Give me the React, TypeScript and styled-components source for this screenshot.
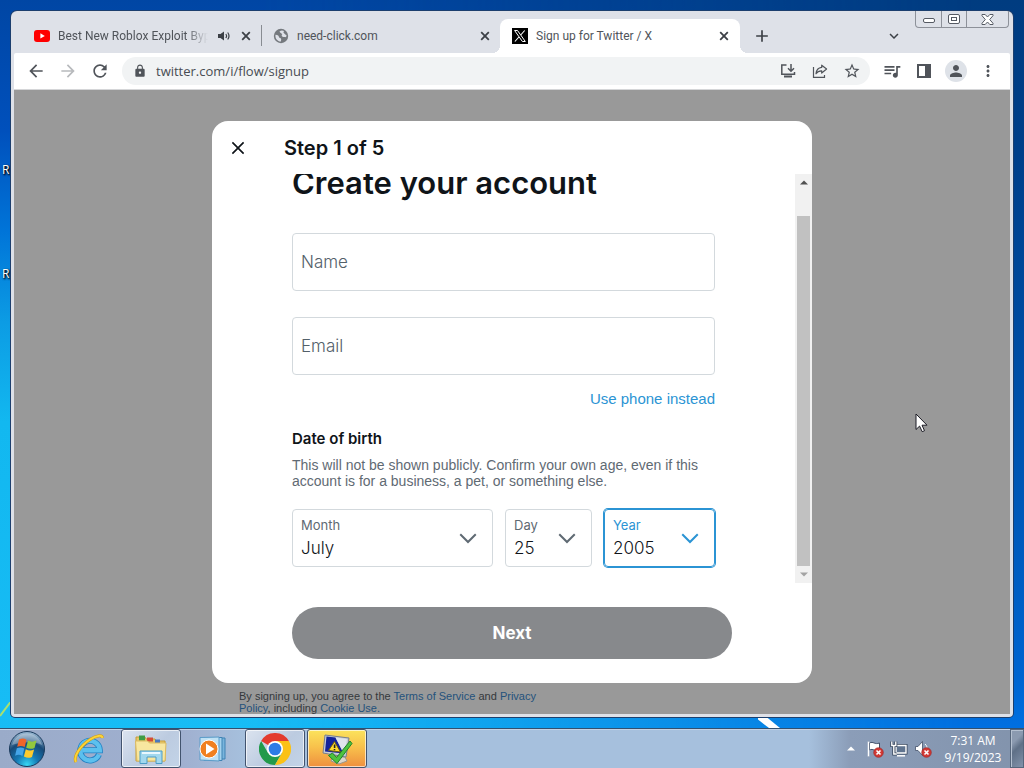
import React from "react";
import styled, { createGlobalStyle, css } from "styled-components";
import {
  MdAdd,
  MdArrowBack,
  MdArrowForward,
  MdExpandMore,
  MdLock,
  MdMoreVert,
  MdPerson,
  MdQueueMusic,
  MdRefresh,
  MdStarBorder,
} from "react-icons/md";

const systemFont = `"Open Sans", "Noto Sans", sans-serif`;
const tabFont = `Roboto, "Open Sans", sans-serif`;
const pageFont = `Inter, Roboto, "Liberation Sans", sans-serif`;
const copyFont = `"Liberation Sans", Arial, sans-serif`;

const GlobalStyle = createGlobalStyle`
  *, *::before, *::after { box-sizing: border-box; }
  body { margin: 0; }
  button, input, select { font: inherit; color: inherit; margin: 0; }
  button { padding: 0; border: 0; background: none; }
  svg { display: block; flex: none; }
`;

/* ---------- Desktop ---------- */

const Desktop = styled.div`
  position: relative;
  display: flex;
  flex-direction: column;
  min-height: 100vh;
  overflow: hidden;
  font-family: ${systemFont};
  background: linear-gradient(#003c80, #003f8a 20%, #0055b2 60%, #0064d0 88%, #0078ee);
  &::before {
    content: "";
    position: absolute;
    inset: 0;
    background: linear-gradient(#0046a4, #0050bc 17%, #0074d8 30%, #0c9ce4 42%, #12b8f0 55%, #18bdf6);
    mask-image: linear-gradient(to right, #000 25%, transparent 95%);
  }
`;

const WallpaperRay = styled.svg<{ $left: string }>`
  position: absolute;
  bottom: 40px;
  left: ${(p) => p.$left};
`;

const DesktopLabel = styled.span<{ $top: number }>`
  position: absolute;
  left: 2px;
  top: ${(p) => p.$top}px;
  font-size: 12px;
  line-height: 16px;
  color: #fff;
  text-shadow: 1px 1px 2px #000, 1px 1px 2px #000;
`;

const WorkArea = styled.div`
  position: relative;
  flex: 1;
  display: flex;
  padding: 11px;
`;

const Pointer = styled.svg`
  position: absolute;
  left: 915px;
  top: 413px;
`;

/* ---------- Browser window ---------- */

const BrowserWindow = styled.div`
  position: relative;
  flex: 1;
  min-width: 0;
  display: flex;
  flex-direction: column;
  padding: 0 3px 3px;
  border-radius: 6px 6px 4px 4px;
  background: #dee1e8;
  box-shadow: 0 0 0 1px #1c3f6e;
`;

const TabStrip = styled.div`
  display: flex;
  align-items: flex-end;
  height: 42px;
  padding-left: 9px;
`;

const Tab = styled.div<{ $active?: boolean; $divider?: boolean }>`
  position: relative;
  flex: 0 1 240px;
  min-width: 0;
  display: flex;
  align-items: center;
  gap: 8px;
  height: 34px;
  margin-left: -1px;
  padding: 0 8px 0 12px;
  font-family: ${tabFont};
  font-size: 12px;
  color: #50545a;
  ${(p) =>
    p.$divider &&
    css`
      border-right: 1px solid #888c92;
      border-image: linear-gradient(transparent 20%, #888c92 20% 78%, transparent 78%) 1;
      padding-right: 7px;
    `}
  ${(p) =>
    p.$active &&
    css`
      background: #fff;
      border-radius: 8px 8px 0 0;
      &::before, &::after {
        content: "";
        position: absolute;
        bottom: 0;
        width: 8px;
        height: 8px;
      }
      &::before { left: -8px; background: radial-gradient(circle at 0 0, transparent 8px, #fff 8px); }
      &::after { right: -8px; background: radial-gradient(circle at 100% 0, transparent 8px, #fff 8px); }
    `}
`;

const TabTitle = styled.span<{ $fade?: boolean }>`
  flex: 1;
  min-width: 0;
  overflow: hidden;
  white-space: nowrap;
  ${(p) => p.$fade && css`mask-image: linear-gradient(to right, #000 85%, transparent);`}
`;

const TabButton = styled.button`
  display: grid;
  place-items: center;
  width: 16px;
  height: 16px;
  color: #3c4046;
`;

const TabControls = styled.div`
  display: flex;
  gap: 6px;
`;

const StripButton = styled.button`
  display: grid;
  place-items: center;
  width: 28px;
  height: 34px;
  margin-left: 8px;
  color: #3c4046;
`;

const TabSearch = styled(StripButton)`
  margin-left: auto;
  margin-right: 102px;
`;

const Caption = styled.div`
  position: absolute;
  top: 0;
  right: 4px;
  display: flex;
  border: 1px solid #8d9199;
  border-top: 0;
  border-radius: 0 0 4px 4px;
`;

const CaptionButton = styled.button<{ $wide?: boolean }>`
  display: grid;
  place-items: center;
  width: ${(p) => (p.$wide ? 42 : 25)}px;
  height: 16px;
  & + & { border-left: 1px solid #8d9199; }
`;

const Toolbar = styled.div`
  display: flex;
  align-items: center;
  gap: 4px;
  height: 37px;
  padding: 0 8px;
  background: #fff;
  border-radius: 2px 2px 0 0;
  border-bottom: 1px solid #d5d6d8;
  color: #50545a;
`;

const ToolButton = styled.button<{ $dim?: boolean }>`
  flex: none;
  display: grid;
  place-items: center;
  width: 28px;
  height: 28px;
  color: ${(p) => (p.$dim ? "#b8babd" : "inherit")};
`;

const Omnibox = styled.div`
  flex: 1;
  min-width: 0;
  display: flex;
  align-items: center;
  gap: 4px;
  height: 28px;
  margin: 0 4px;
  padding: 0 4px 0 11px;
  border-radius: 14px;
  background: #f1f3f4;
`;

const Address = styled.input`
  flex: 1;
  min-width: 0;
  padding: 0 0 0 5px;
  border: 0;
  outline: 0;
  background: none;
  font-size: 13px;
  line-height: 20px;
  color: #484c52;
`;

const Avatar = styled.span`
  display: grid;
  place-items: center;
  width: 22px;
  height: 22px;
  border-radius: 50%;
  background: #dee2e8;
`;

/* ---------- Sign-up page ---------- */

const Page = styled.main`
  flex: 1;
  display: flex;
  flex-direction: column;
  align-items: center;
  overflow: hidden;
  padding-top: 31px;
  background: #999;
  font-family: ${pageFont};
  color: #0f1419;
`;

const Dialog = styled.section`
  width: 600px;
  max-width: 100%;
  border-radius: 16px;
  background: #fff;
  overflow: hidden;
`;

const DialogHeader = styled.header`
  display: flex;
  align-items: center;
  gap: 36px;
  height: 53px;
  padding: 0 16px;
`;

const CloseButton = styled.button`
  display: grid;
  place-items: center;
  width: 20px;
  height: 20px;
`;

const StepTitle = styled.h2`
  margin: 0;
  font-size: 20px;
  line-height: 24px;
  font-weight: 600;
`;

const DialogBody = styled.div`
  display: flex;
  overflow: hidden;
`;

const Form = styled.form`
  flex: 1;
  min-width: 0;
  display: flex;
  flex-direction: column;
  padding: 0 80px 16px;
`;

const Heading = styled.h1`
  margin: 0 0 41px;
  font-size: 31px;
  line-height: 18px;
  font-weight: 600;
`;

const TextField = styled.input`
  width: 100%;
  height: 58px;
  margin-bottom: 26px;
  padding: 0 8px;
  border: 1px solid #d3d9dd;
  border-radius: 4px;
  background: none;
  font-size: 17px;
  font-weight: 300;
  &::placeholder { color: #536069; opacity: 1; }
`;

const EmailField = styled(TextField)`
  margin-bottom: 14px;
`;

const PhoneLink = styled.a`
  align-self: flex-end;
  margin-bottom: 20px;
  font-family: ${copyFont};
  font-size: 15px;
  line-height: 20px;
  color: #2b94d4;
  text-decoration: none;
`;

const GroupTitle = styled.h3`
  margin: 0 0 8px;
  font-size: 15px;
  line-height: 20px;
  font-weight: 600;
`;

const Hint = styled.p`
  margin: 0 0 20px;
  font-family: ${copyFont};
  font-size: 14px;
  line-height: 16px;
  color: #5f6a73;
`;

const DateRow = styled.div`
  display: grid;
  grid-template-columns: 201fr 87fr 111fr;
  gap: 12px;
`;

const SelectBox = styled.div<{ $focused?: boolean }>`
  display: grid;
  height: 58px;
  border: 1px solid ${(p) => (p.$focused ? "#2b94d4" : "#d3d9dd")};
  box-shadow: ${(p) => (p.$focused ? "0 0 0 1px #2b94d4" : "none")};
  border-radius: 4px;
  color: ${(p) => (p.$focused ? "#2b94d4" : "#5f6a73")};
  & > * { grid-area: 1 / 1; }
  & > svg { place-self: center end; margin-right: 12px; pointer-events: none; }
`;

const SelectLabel = styled.label`
  padding: 6px 8px;
  font-size: 13px;
  line-height: 18px;
`;

const Select = styled.select`
  width: 100%;
  height: 100%;
  padding: 20px 8px 0;
  border: 0;
  outline: 0;
  appearance: none;
  background: none;
  font-size: 17px;
  font-weight: 300;
  color: #0f1419;
`;

const DialogFooter = styled.footer`
  padding: 24px 80px;
`;

const NextButton = styled.button`
  width: 100%;
  height: 52px;
  border-radius: 26px;
  background: #87898c;
  color: #fff;
  font-size: 17px;
  font-weight: 700;
`;

const ScrollBar = styled.div`
  display: flex;
  flex-direction: column;
  align-items: center;
  width: 17px;
  background: #f1f1f1;
`;

const ScrollArrow = styled.button`
  display: grid;
  place-items: center;
  width: 17px;
  height: 17px;
`;

const ScrollThumb = styled.div`
  flex: 1;
  width: 13px;
  margin-top: 25px;
  background: #c1c1c1;
`;

const Terms = styled.p`
  width: 600px;
  max-width: 100%;
  margin: 7px 0 0;
  padding: 0 260px 0 27px;
  font-family: ${copyFont};
  font-size: 11px;
  line-height: 12px;
  color: #34383c;
  a { color: #24527c; text-decoration: none; }
`;

/* ---------- Taskbar ---------- */

const Taskbar = styled.footer`
  position: relative;
  display: flex;
  height: 40px;
  border-top: 1px solid #33506f;
  box-shadow: inset 0 1px 0 #c3d2e6;
  background: linear-gradient(to right, #9aabc9, #a0b0d0 18%, #a6c0dd 24%, #a6c0dd 79%, #8b9db8 83%, #8293ac);
`;

const StartButton = styled.button`
  display: grid;
  place-items: center;
  width: 54px;
  margin-right: 5px;
`;

const TaskButton = styled.button<{ $state?: "open" | "alert" }>`
  display: grid;
  place-items: center;
  width: 60px;
  margin-right: 2px;
  border: 1px solid transparent;
  border-radius: 3px;
  ${(p) =>
    p.$state &&
    css`
      border-color: #42536e;
      box-shadow: inset 0 0 0 1px #ffffffaa;
      background: ${p.$state === "open"
        ? "linear-gradient(135deg, #dbe3ef, #bccbe0 55%, #c3d4e8)"
        : "linear-gradient(#fbe35c, #f8c24c 45%, #ef8f3f)"};
    `}
`;

const Tray = styled.div`
  display: flex;
  align-items: center;
  gap: 6px;
  margin-left: auto;
`;

const TrayButton = styled.button`
  display: grid;
  place-items: center;
  width: 18px;
  height: 24px;
`;

const Clock = styled.time`
  width: 66px;
  margin: 0 4px 0 2px;
  font-size: 12px;
  line-height: 17px;
  text-align: center;
  color: #fff;
`;

const ShowDesktop = styled.button`
  width: 14px;
  border: 1px solid #56667c;
  box-shadow: inset 1px 1px 0 #b4c0d0;
  background: linear-gradient(135deg, #8b9ab0 30%, #5f7087 50%, #8292aa);
`;

/* ---------- Drawings ---------- */

const YouTubeIcon = () => (
  <svg width="16" height="16" viewBox="0 0 16 16">
    <rect y="2" width="16" height="12" rx="3" fill="#f00" />
    <path d="M6.4 5.3v5.2L10.8 8z" fill="#fff" />
  </svg>
);

const XIcon = () => (
  <svg width="16" height="16" viewBox="0 0 16 16">
    <path d="M0 0h16v16H0z" />
    <path d="M2.6 2.5h2.9l7.8 11h-2.9z" fill="#000" stroke="#fff" strokeWidth="1" />
    <path d="M12.7 2.5 8.7 7M6.9 9l-4 4.5" stroke="#fff" strokeWidth="1.1" />
  </svg>
);

const GlobeIcon = () => (
  <svg width="16" height="16" viewBox="0 0 16 16">
    <circle cx="8" cy="8" r="7.200" fill="#75797e" />
    <path d="M2.500 6.800c2.500.1 3.200 1 3.400 2.200.3 1.300 2.400.8 2.300 2.300l-.3 2.300C4.500 13.500 1.800 10.500 2.500 6.800z" fill="#dee1e8" />
    <path d="M6.500 3.400c1.300-1.200 3.300-1.200 4.500-.4l-.6 1.600 1.400 1.500c.6.8 1.500.6 1.700 1.500.2 1-.6 1.900-1.600 1.500-.8-.3-2.200.2-2.900-.8-.6-.9-.3-1.700.4-2.200-.9-.6-2.200-1.400-2.900-2.700z" fill="#dee1e8" />
  </svg>
);

const TabCloseIcon = () => (
  <svg width="10" height="10" viewBox="0 0 10 10">
    <path d="m1.200 1.200 7.600 7.600M8.800 1.200 1.200 8.800" stroke="currentColor" strokeWidth="1.800" />
  </svg>
);

const SoundIcon = () => (
  <svg width="12" height="10" viewBox="0 0 12 10">
    <path d="M0 3h2.500L6 .5v9L2.500 7H0z" fill="currentColor" />
    <path d="M7.800 3c.8 1 .8 3 0 4M9.700 1.500c1.500 2 1.500 5 0 7" fill="none" stroke="currentColor" strokeWidth="1.200" />
  </svg>
);

const InstallIcon = () => (
  <svg width="16" height="16" viewBox="0 0 16 16" fill="none" stroke="currentColor" strokeWidth="1.500">
    <path d="M6.500 2H1.800v9.300h12.700V9" />
    <path d="M11 1v7M8 5.300l3 3 3-3" />
    <path d="M4 13.500h8" strokeWidth="2" />
  </svg>
);

const ShareIcon = () => (
  <svg width="16" height="16" viewBox="0 0 16 16" fill="none" stroke="currentColor" strokeWidth="1.200">
    <path d="M1.500 4v10.300h11V12" />
    <path d="M9.700 2.200 14.600 6 9.700 10V7.800C7.200 7.700 5.400 8.600 4 10.800 4.300 7.200 6.300 4.800 9.700 4.400z" strokeLinejoin="round" />
  </svg>
);

const PanelIcon = () => (
  <svg width="14" height="14" viewBox="0 0 14 14">
    <path fillRule="evenodd" d="M0 0h14v14H0zM2 2v10h6V2z" fill="currentColor" />
  </svg>
);

const MinimizeGlyph = () => (
  <svg width="12" height="8" viewBox="0 0 12 8">
    <rect x="0.5" y="3.5" width="11" height="4" rx="1.5" fill="#fff" stroke="#555a63" />
  </svg>
);

const MaximizeGlyph = () => (
  <svg width="12" height="10" viewBox="0 0 12 10" fill="#fff" stroke="#555a63">
    <rect x="0.5" y="0.5" width="11" height="9" rx="1.5" />
    <rect x="3.5" y="3.5" width="5" height="3" />
  </svg>
);

const CloseGlyph = () => (
  <svg width="13" height="11" viewBox="0 0 13 11">
    <path
      d="M1 .5h3.200L6.500 3 8.800.5H12v1.200L8.700 5.500 12 9.300v1.200H8.800L6.500 8l-2.300 2.500H1V9.300l3.300-3.800L1 1.700z"
      fill="#fff"
      stroke="#555a63"
    />
  </svg>
);

const DialogClose = () => (
  <svg width="20" height="20" viewBox="0 0 24 24" fill="#0f1419">
    <path d="M10.590 12 4.540 5.960l1.420-1.420L12 10.590l6.040-6.050 1.420 1.420L13.410 12l6.050 6.040-1.420 1.420L12 13.410l-6.040 6.050-1.420-1.420z" />
  </svg>
);

const Chevron = () => (
  <svg width="24" height="24" viewBox="0 0 24 24" fill="currentColor">
    <path d="M3.540 8.960l1.420-1.420L12 14.590l7.040-7.050 1.420 1.420L12 17.410z" />
  </svg>
);

const Triangle = ({ down, color = "#505050" }: { down?: boolean; color?: string }) => (
  <svg width="8" height="5" viewBox="0 0 8 5">
    <path d={down ? "M0 .5h8L4 4.500z" : "M0 4.500h8L4 .5z"} fill={color} />
  </svg>
);

const StartOrb = () => (
  <svg width="38" height="38" viewBox="0 0 38 38">
    <defs>
      <radialGradient id="orb" cx=".5" cy=".95" r=".9">
        <stop offset="0" stopColor="#37d8f4" />
        <stop offset=".35" stopColor="#1579b4" />
        <stop offset=".7" stopColor="#174a78" />
        <stop offset="1" stopColor="#8fb0cc" />
      </radialGradient>
    </defs>
    <circle cx="19" cy="19" r="17.5" fill="url(#orb)" stroke="#1a3a5c" />
    <path d="M4 15a15.500 15.500 0 0 1 30 0c-8-4-20-3-30 0z" fill="#fff" opacity=".3" />
    <path d="M11 9.500c3-1.600 5-1.300 7.500.2L16.700 17c-2.600-1.500-4.700-1.400-7.500-.2z" fill="#f0652a" />
    <path d="M20 10.500c3 1.600 5 1.400 8.500.1L26.500 18c-3 1.300-5.500 1-8.300-.3z" fill="#93c83e" />
    <path d="M8.800 18.300c2.900-1.300 5-1.200 7.500.2L14.400 26c-2.500-1.500-4.600-1.500-7.300-.3z" fill="#45a5e8" />
    <path d="M17.800 19.300c2.800 1.500 5.300 1.500 8.300.3L24 27c-2.900 1.300-5.300 1-8.100-.4z" fill="#fdcb2e" />
  </svg>
);

const ExplorerE = () => (
  <svg width="32" height="32" viewBox="0 0 32 32" fill="none">
    <path d="M26 21.500a9.800 9.800 0 1 1 .8-4.300H9.500" stroke="#2382c4" strokeWidth="6" />
    <path d="M26 21.500a9.800 9.800 0 1 1 .8-4.300H9.500" stroke="#5cc0ee" strokeWidth="4.400" />
    <path d="M3 29c-3-5 4-16 14-22.500C23 2.500 29 1.500 29.500 5" stroke="#d59c10" strokeWidth="3" />
    <path d="M3 29c-3-5 4-16 14-22.500C23 2.500 29 1.500 29.500 5" stroke="#fbd438" strokeWidth="2" />
  </svg>
);

const FolderIcon = () => (
  <svg width="34" height="32" viewBox="0 0 34 32">
    <path d="M2 4h9l1 2h9l1 2h9v20H2z" fill="#e8c766" stroke="#c69c3a" />
    <path d="M5 2.500h6v5H5z" fill="#3e9c46" />
    <path d="M13 4.500h6v4h-6z" fill="#d44b35" />
    <path d="M21 6.500h5v4h-5z" fill="#4a79bd" />
    <path d="M1.500 8h12l2 2H32l-1 18H3z" fill="#f8e7a0" stroke="#dcbb61" />
    <path d="M6 30.500V18h22v12.500h-6V24h-9v6.500z" fill="#a2d8ee" stroke="#4c9cc6" />
    <path d="M8 20h18" stroke="#e9f8ff" strokeWidth="2" />
  </svg>
);

const MediaIcon = () => (
  <svg width="28" height="28" viewBox="0 0 28 28">
    <path d="M8 3h18v21H8z" fill="#79b4dc" stroke="#3f83b4" />
    <path d="M5 2.500h18v23H5z" fill="#a5d3ee" stroke="#3f83b4" />
    <path d="M1 2.500 20 2v24L1 25z" fill="#bfe1f4" stroke="#5b9cc9" />
    <circle cx="10" cy="14" r="9" fill="#f08020" stroke="#fff" />
    <path d="M7 8.500v11l8.500-5.500z" fill="#fff" />
  </svg>
);

const ChromeIcon = () => (
  <svg width="32" height="32" viewBox="0 0 32 32">
    <path d="M16 16 2.140 8A16 16 0 0 1 29.860 8z" fill="#e33b2e" />
    <path d="M16 16 22.930 20 16 32A16 16 0 0 1 2.140 8l6.930 12z" fill="#229a4b" />
    <path d="M16 8h13.860A16 16 0 0 1 16 32l6.930-12z" fill="#fbc116" />
    <circle cx="16" cy="16" r="8" fill="#fff" />
    <circle cx="16" cy="16" r="6.3" fill="#2c7be5" />
  </svg>
);

const CheckerIcon = () => (
  <svg width="34" height="34" viewBox="0 0 34 34">
    <path d="M13 25h12l2 4-8 3-8-3z" fill="#d9d6cc" stroke="#98958a" />
    <path d="M5 3l24 3-3 19L3 21z" fill="#c7ccd5" stroke="#777f8c" />
    <path d="M6.500 4.500l9 1 8 16L5 19.500z" fill="#13229a" />
    <path d="M15.500 5.500l11.500 1.500-2.500 15.500z" fill="#dfe4ec" />
    <path d="M14.500 9.500 20.500 20l-12-1.500z" fill="#ffd92e" stroke="#6b5b10" />
    <path d="M14.600 12.500v3.500M14.500 17v1.300" stroke="#222" strokeWidth="1.6" />
    <path d="m8.500 23.500 4-2.500 4 4.500L30 9l2 2.500-15 20z" fill="#4cc33e" stroke="#21822a" />
  </svg>
);

const ErrorBadge = () => (
  <g>
    <circle cx="12.5" cy="12.5" r="4.8" fill="#d23a36" stroke="#9c1f1f" strokeWidth=".6" />
    <path d="m10.500 10.500 4 4m0-4-4 4" stroke="#fff" strokeWidth="1.6" />
  </g>
);

const FlagIcon = () => (
  <svg width="18" height="18" viewBox="0 0 18 18">
    <path d="M2.500 1.500v15M3.500 3c4-2 5 2 10 0v7c-5 2-6-2-10 0z" fill="#fff" stroke="#42506a" />
    <path d="M2.500 1.500v15" stroke="#fff" strokeWidth="1.5" />
    <ErrorBadge />
  </svg>
);

const NetworkIcon = () => (
  <svg width="18" height="18" viewBox="0 0 18 18">
    <path d="M6 5.500h10v7.500H6z" fill="#60748f" stroke="#36445a" strokeWidth="3" />
    <path d="M6 5.500h10v7.500H6z" fill="#60748f" stroke="#fff" strokeWidth="1.4" />
    <path d="M7 15.800h8" stroke="#fff" strokeWidth="1.5" />
    <path d="M1.800 1.500v4h4v-4M3.800 6v8h3" fill="none" stroke="#36445a" strokeWidth="3" />
    <path d="M1.800 1.500v4h4v-4M3.800 6v8h3" fill="none" stroke="#fff" strokeWidth="1.4" />
  </svg>
);

const SpeakerIcon = () => (
  <svg width="18" height="18" viewBox="0 0 18 18">
    <path d="M1.500 6.500h2.500l4.500-5v14l-4.500-5h-2.500z" fill="#fff" stroke="#42506a" strokeWidth=".8" />
    <path d="M11 4c2 2 2 3 2 5" stroke="#fff" fill="none" />
    <ErrorBadge />
  </svg>
);

/* ---------- Parts ---------- */

type DateSelectProps = { id: string; label: string; value: string; focused?: boolean };

const DateSelect = ({ id, label, value, focused }: DateSelectProps) => (
  <SelectBox $focused={focused}>
    <SelectLabel htmlFor={id}>{label}</SelectLabel>
    <Chevron />
    <Select id={id} defaultValue={value}>
      <option>{value}</option>
    </Select>
  </SelectBox>
);

const CloseTab = () => (
  <TabButton aria-label="Close tab">
    <TabCloseIcon />
  </TabButton>
);

export default function App() {
  return (
    <Desktop>
      <GlobalStyle />
      <WallpaperRay $left="74%" width="24" height="11" viewBox="0 0 24 11">
        <path d="M-6-2 6-2 22 11H11z" fill="#fff" />
      </WallpaperRay>
      <WallpaperRay $left="0" width="12" height="26" viewBox="0 0 12 26">
        <path d="M0 14 12-2" stroke="#a8e070" strokeWidth="2" />
      </WallpaperRay>
      <DesktopLabel $top={162}>R</DesktopLabel>
      <DesktopLabel $top={266}>R</DesktopLabel>

      <WorkArea>
        <BrowserWindow>
          <TabStrip>
            <Tab $divider>
              <YouTubeIcon />
              <TabTitle $fade>Best New Roblox Exploit Byp</TabTitle>
              <TabControls>
                <TabButton aria-label="Mute tab"><SoundIcon /></TabButton>
                <CloseTab />
              </TabControls>
            </Tab>
            <Tab>
              <GlobeIcon />
              <TabTitle>need-click.com</TabTitle>
              <CloseTab />
            </Tab>
            <Tab $active>
              <XIcon />
              <TabTitle>Sign up for Twitter / X</TabTitle>
              <CloseTab />
            </Tab>
            <StripButton aria-label="New tab"><MdAdd size={20} /></StripButton>
            <TabSearch aria-label="Search tabs"><MdExpandMore size={18} /></TabSearch>
          </TabStrip>
          <Caption>
            <CaptionButton aria-label="Minimize"><MinimizeGlyph /></CaptionButton>
            <CaptionButton aria-label="Maximize"><MaximizeGlyph /></CaptionButton>
            <CaptionButton $wide aria-label="Close"><CloseGlyph /></CaptionButton>
          </Caption>

          <Toolbar>
            <ToolButton aria-label="Back"><MdArrowBack size={20} /></ToolButton>
            <ToolButton $dim aria-label="Forward"><MdArrowForward size={20} /></ToolButton>
            <ToolButton aria-label="Reload"><MdRefresh size={20} /></ToolButton>
            <Omnibox>
              <MdLock size={14} />
              <Address aria-label="Address" defaultValue="twitter.com/i/flow/signup" />
              <ToolButton aria-label="Install"><InstallIcon /></ToolButton>
              <ToolButton aria-label="Share"><ShareIcon /></ToolButton>
              <ToolButton aria-label="Bookmark"><MdStarBorder size={18} /></ToolButton>
            </Omnibox>
            <ToolButton aria-label="Media"><MdQueueMusic size={20} /></ToolButton>
            <ToolButton aria-label="Side panel"><PanelIcon /></ToolButton>
            <ToolButton aria-label="Profile"><Avatar><MdPerson size={18} /></Avatar></ToolButton>
            <ToolButton aria-label="Menu"><MdMoreVert size={18} /></ToolButton>
          </Toolbar>

          <Page>
            <Dialog role="dialog" aria-labelledby="step">
              <DialogHeader>
                <CloseButton aria-label="Close"><DialogClose /></CloseButton>
                <StepTitle id="step">Step 1 of 5</StepTitle>
              </DialogHeader>
              <DialogBody>
                <Form id="signup">
                  <Heading>Create your account</Heading>
                  <TextField aria-label="Name" placeholder="Name" />
                  <EmailField aria-label="Email" type="email" placeholder="Email" />
                  <PhoneLink href="#phone">Use phone instead</PhoneLink>
                  <GroupTitle>Date of birth</GroupTitle>
                  <Hint>
                    This will not be shown publicly. Confirm your own age, even if this account is for a
                    business, a pet, or something else.
                  </Hint>
                  <DateRow>
                    <DateSelect id="month" label="Month" value="July" />
                    <DateSelect id="day" label="Day" value="25" />
                    <DateSelect id="year" label="Year" value="2005" focused />
                  </DateRow>
                </Form>
                <ScrollBar>
                  <ScrollArrow aria-label="Scroll up"><Triangle /></ScrollArrow>
                  <ScrollThumb />
                  <ScrollArrow aria-label="Scroll down"><Triangle down color="#a3a3a3" /></ScrollArrow>
                </ScrollBar>
              </DialogBody>
              <DialogFooter>
                <NextButton type="submit" form="signup">Next</NextButton>
              </DialogFooter>
            </Dialog>
            <Terms>
              By signing up, you agree to the <a href="#tos">Terms of Service</a> and{" "}
              <a href="#privacy">Privacy Policy</a>, including <a href="#cookies">Cookie Use.</a>
            </Terms>
          </Page>
        </BrowserWindow>
      </WorkArea>

      <Taskbar>
        <StartButton aria-label="Start"><StartOrb /></StartButton>
        <TaskButton aria-label="Internet Explorer"><ExplorerE /></TaskButton>
        <TaskButton $state="open" aria-label="File Explorer"><FolderIcon /></TaskButton>
        <TaskButton aria-label="Media Player"><MediaIcon /></TaskButton>
        <TaskButton $state="open" aria-label="Chrome"><ChromeIcon /></TaskButton>
        <TaskButton $state="alert" aria-label="System check"><CheckerIcon /></TaskButton>
        <Tray>
          <TrayButton aria-label="Show hidden icons"><Triangle color="#fff" /></TrayButton>
          <TrayButton aria-label="Action Center"><FlagIcon /></TrayButton>
          <TrayButton aria-label="Network"><NetworkIcon /></TrayButton>
          <TrayButton aria-label="Volume"><SpeakerIcon /></TrayButton>
          <Clock dateTime="2023-09-19T07:31">7:31 AM<br />9/19/2023</Clock>
        </Tray>
        <ShowDesktop aria-label="Show desktop" />
      </Taskbar>

      <Pointer width="14" height="21" viewBox="0 0 14 21">
        <path d="M1 1v15.500l3.600-3.400 2.600 5.600 2.300-1-2.500-5.500H12z" fill="#fff" stroke="#1b1b24" />
      </Pointer>
    </Desktop>
  );
}
